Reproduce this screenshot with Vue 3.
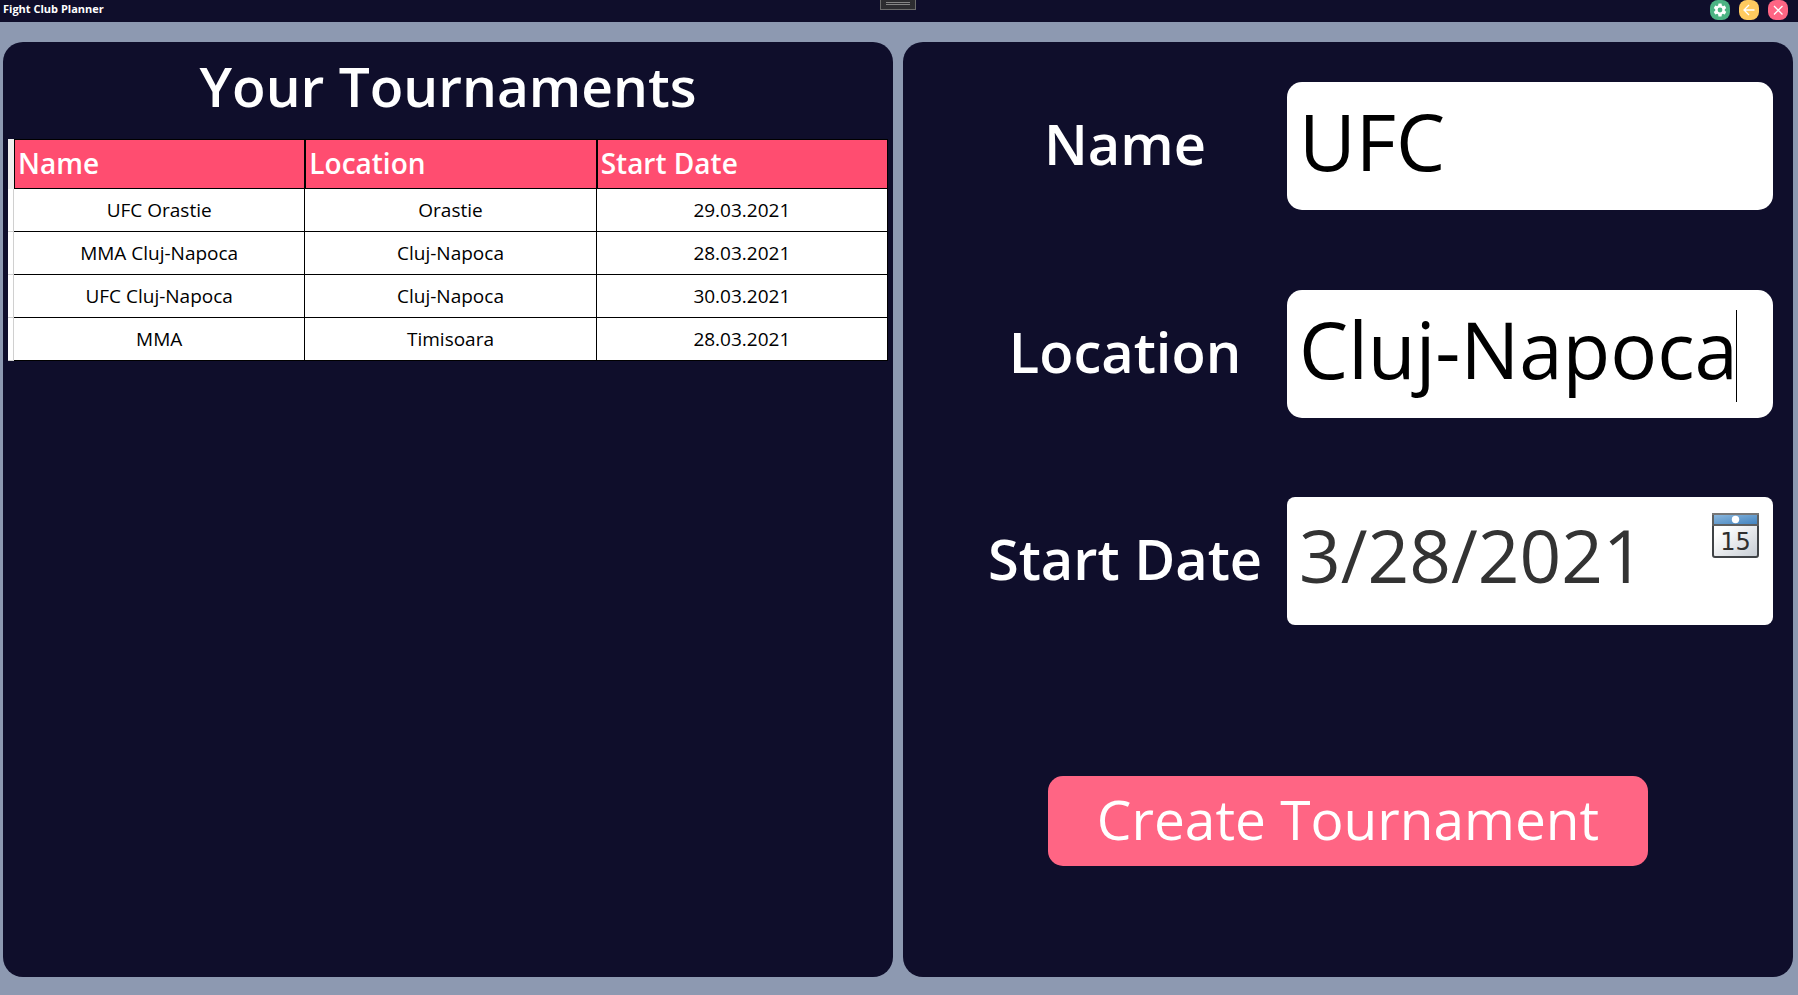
<script setup>
import { ref } from 'vue'

const tournaments = ref([
  { name: 'UFC Orastie', location: 'Orastie', date: '29.03.2021' },
  { name: 'MMA Cluj-Napoca', location: 'Cluj-Napoca', date: '28.03.2021' },
  { name: 'UFC Cluj-Napoca', location: 'Cluj-Napoca', date: '30.03.2021' },
  { name: 'MMA', location: 'Timisoara', date: '28.03.2021' },
])

const name = ref('UFC')
const location = ref('Cluj-Napoca')
const startDate = ref('3/28/2021')
</script>

<template>
  <div class="window">
    <header class="titlebar">
      <span class="app-name">Fight Club Planner</span>
      <div class="grip"><i></i><i></i></div>
      <div class="controls">
        <button type="button" class="dot green" aria-label="Settings">
          <svg viewBox="0 0 24 24" width="16" height="16">
            <path fill="#fff" d="M19.14 12.94c.04-.3.06-.61.06-.94 0-.32-.02-.64-.07-.94l2.03-1.58a.49.49 0 0 0 .12-.61l-1.92-3.32a.49.49 0 0 0-.59-.22l-2.39.96c-.5-.38-1.03-.7-1.62-.94l-.36-2.54a.48.48 0 0 0-.48-.41h-3.84a.47.47 0 0 0-.47.41l-.36 2.54c-.59.24-1.13.57-1.62.94l-2.39-.96a.48.48 0 0 0-.59.22L2.74 8.87a.47.47 0 0 0 .12.61l2.03 1.58c-.05.3-.09.63-.09.94s.02.64.07.94l-2.03 1.58a.49.49 0 0 0-.12.61l1.92 3.32c.12.22.37.29.59.22l2.39-.96c.5.38 1.03.7 1.62.94l.36 2.54c.05.24.24.41.48.41h3.84c.24 0 .44-.17.47-.41l.36-2.54c.59-.24 1.13-.56 1.62-.94l2.39.96c.22.08.47 0 .59-.22l1.92-3.32a.47.47 0 0 0-.12-.61l-2.01-1.58zM12 15.6A3.6 3.6 0 1 1 12 8.4a3.6 3.6 0 0 1 0 7.2z" />
          </svg>
        </button>
        <button type="button" class="dot yellow" aria-label="Back">
          <svg viewBox="0 0 16 16" width="16" height="16">
            <path d="M13.5 8H3M8 3L3 8l5 5" fill="none" stroke="#fff" stroke-width="1.3" />
          </svg>
        </button>
        <button type="button" class="dot pink" aria-label="Close">
          <svg viewBox="0 0 16 16" width="16" height="16">
            <path d="M4 4l8.500 8.500M12.500 4L4 12.500" fill="none" stroke="#fff" stroke-width="1.300" />
          </svg>
        </button>
      </div>
    </header>

    <main class="content">
      <section class="panel list">
        <h1>Your Tournaments</h1>
        <table>
          <colgroup>
            <col class="gutter-col" />
            <col />
            <col />
            <col />
          </colgroup>
          <thead>
            <tr>
              <td class="gutter"></td>
              <th scope="col">Name</th>
              <th scope="col">Location</th>
              <th scope="col">Start Date</th>
            </tr>
          </thead>
          <tbody>
            <tr v-for="t in tournaments" :key="t.name">
              <td class="gutter"></td>
              <td>{{ t.name }}</td>
              <td>{{ t.location }}</td>
              <td>{{ t.date }}</td>
            </tr>
          </tbody>
        </table>
      </section>

      <form class="panel form" @submit.prevent>
        <div class="row">
          <label for="name">Name</label>
          <div class="field">
            <input id="name" v-model="name" type="text" />
          </div>
        </div>
        <div class="row">
          <label for="location">Location</label>
          <div class="field">
            <input id="location" v-model="location" type="text" />
            <span class="caret"></span>
          </div>
        </div>
        <div class="row">
          <label for="date">Start Date</label>
          <div class="field date">
            <input id="date" v-model="startDate" type="text" />
            <button type="button" class="calendar" aria-label="Pick a date">
              <svg viewBox="0 0 47 45" width="47" height="45">
                <defs>
                  <linearGradient id="cal-top" x1="0" y1="0" x2="1" y2="1">
                    <stop offset="0" stop-color="#8ab6dc" />
                    <stop offset="1" stop-color="#4384c0" />
                  </linearGradient>
                  <linearGradient id="cal-page" x1="0" y1="0" x2="1" y2="1">
                    <stop offset="0.200" stop-color="#fff" />
                    <stop offset="1" stop-color="#c6ccd3" />
                  </linearGradient>
                </defs>
                <rect x="1" y="10" width="45" height="34" rx="2" fill="url(#cal-page)" stroke="#404346" stroke-width="2" />
                <rect x="0" y="0" width="47" height="13" fill="#5d5f60" />
                <rect x="0" y="0" width="47" height="2" fill="#777" />
                <rect x="2" y="2" width="43" height="9" fill="url(#cal-top)" />
                <circle cx="23.500" cy="6.500" r="3.700" fill="#fff" />
                <text x="23.500" y="37" text-anchor="middle" class="cal-day">15</text>
              </svg>
            </button>
          </div>
        </div>
        <div class="actions">
          <button type="submit" class="create">Create Tournament</button>
        </div>
      </form>
    </main>
  </div>
</template>

<style>
body {
  margin: 0;
  background: #8d99b1;
}
</style>

<style scoped>
.window {
  display: flex;
  flex-direction: column;
  box-sizing: border-box;
  min-height: 100vh;
  background: #8d99b1;
  color: #fff;
  font-family: "Open Sans", "Noto Sans", sans-serif;
}

button,
input {
  margin: 0;
  padding: 0;
  border: 0;
  font-family: inherit;
}

.titlebar {
  position: relative;
  display: flex;
  justify-content: space-between;
  height: 22px;
  padding: 0 10px 0 3px;
  background: #0f0e2b;
}

.app-name {
  font-size: 11px;
  font-weight: 700;
  line-height: 18px;
}

.grip {
  position: absolute;
  top: 0;
  left: 50%;
  display: flex;
  flex-direction: column;
  gap: 1px;
  box-sizing: border-box;
  width: 36px;
  height: 10px;
  margin-left: -19px;
  padding: 2px 5px;
  border: 1px solid #6b6b6b;
  border-top: 0;
  background: #2d2d30;
}

.grip i {
  height: 1px;
  background: #858585;
}

.controls {
  display: flex;
  gap: 9px;
}

.dot {
  display: flex;
  align-items: center;
  justify-content: center;
  width: 20px;
  height: 20px;
  border-radius: 8px;
}

.green {
  background: #4cb383;
}

.yellow {
  background: #ffca5f;
}

.pink {
  background: #ff6584;
}

.content {
  display: grid;
  flex: 1;
  grid-template-columns: minmax(0, 1fr) minmax(0, 1fr);
  gap: 10px;
  padding: 20px 5px 18px 3px;
}

.panel {
  border-radius: 20px;
  background: #0f0e2b;
}

.list {
  padding: 0 5px;
}

h1 {
  margin: 0;
  padding: 4px 0 13px;
  font-size: 55px;
  font-weight: 600;
  line-height: 80px;
  text-align: center;
}

table {
  width: 100%;
  border-spacing: 0;
  table-layout: fixed;
}

.gutter-col {
  width: 6px;
}

th {
  box-sizing: border-box;
  height: 50px;
  padding: 0 3px 2px;
  border: 1px solid #000;
  background: #ff4d70;
  font-size: 28px;
  font-weight: 600;
  line-height: 40px;
  text-align: left;
}

td {
  box-sizing: border-box;
  height: 43px;
  padding: 0;
  border-right: 1px solid #000;
  border-bottom: 1px solid #000;
  background: #fff;
  color: #000;
  font-size: 19px;
  line-height: 28px;
  text-align: center;
}

td.gutter {
  border-color: #d0d0d0;
}

thead td.gutter {
  border-color: #f0f0f0;
  background: #f0f0f0;
}

.form {
  display: grid;
  grid-template-columns: minmax(0, 1fr);
  grid-template-rows: 2fr 2fr 2fr 3fr;
  padding: 0 20px 0 60px;
}

.row {
  display: grid;
  grid-template-columns: minmax(0, 2fr) minmax(0, 3fr);
  align-items: center;
}

.row label {
  padding-bottom: 6px;
  font-size: 56px;
  font-weight: 600;
  line-height: 80px;
  text-align: center;
  white-space: nowrap;
}

.field {
  position: relative;
  display: flex;
  box-sizing: border-box;
  height: 128px;
  padding: 4px 12px 14px;
  border-radius: 15px;
  background: #fff;
}

.field input {
  flex: 1;
  min-width: 0;
  outline: 0;
  background: transparent;
  color: #000;
  font-size: 78px;
}

.caret {
  position: absolute;
  top: 20px;
  right: 36px;
  width: 1px;
  height: 92px;
  background: #000;
}

.date {
  padding: 0 14px 14px 12px;
  border-radius: 8px;
}

.date input {
  color: #333;
  font-size: 73px;
}

.calendar {
  align-self: flex-start;
  height: 45px;
  margin-top: 16px;
  background: none;
}

.calendar svg {
  display: block;
}

.cal-day {
  fill: #2f2f2f;
  font-family: "DejaVu Sans", sans-serif;
  font-size: 24px;
}

.actions {
  display: flex;
  align-items: center;
  justify-content: center;
  /* keeps the button centred in the panel, whose side paddings differ */
  margin-left: -40px;
}

.create {
  width: 600px;
  height: 90px;
  padding-bottom: 4px;
  border-radius: 15px;
  background: #ff6584;
  color: #fff;
  font-size: 55px;
  line-height: 80px;
}
</style>
